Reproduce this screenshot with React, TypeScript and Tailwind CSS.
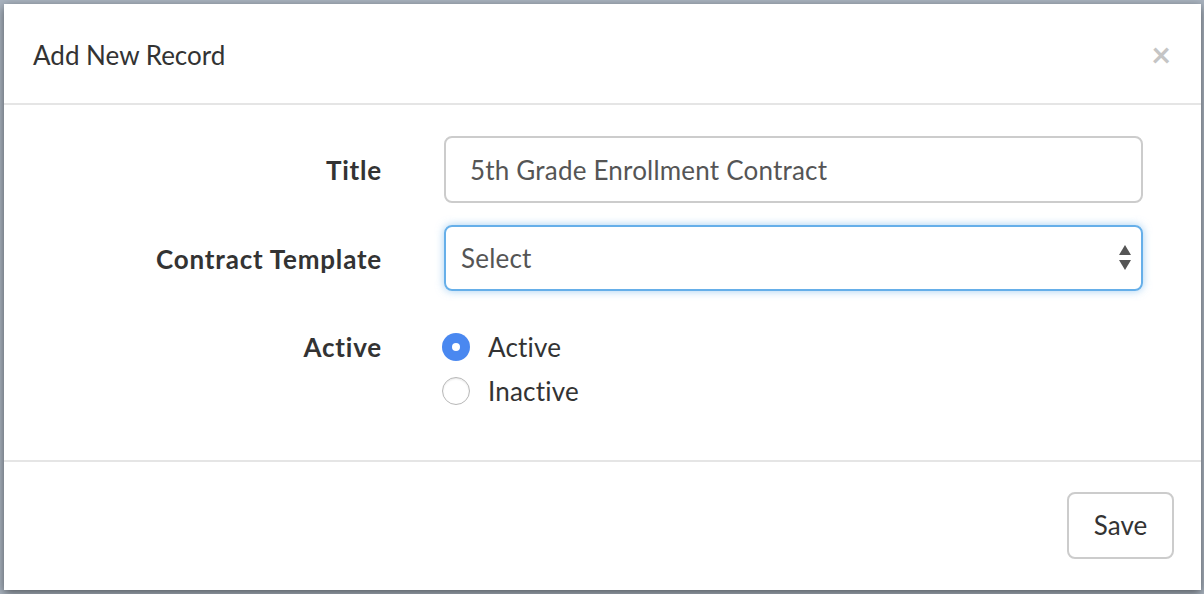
import React, { useState } from "react";

const font = { fontFamily: "Lato, 'Liberation Sans', sans-serif" };

export default function App() {
  const [active, setActive] = useState(true);

  return (
    <div
      className="w-[1204px] h-[594px] overflow-hidden bg-[#a9b3bf] pt-[4px] pl-[4px]"
      style={font}
    >
      <div className="w-[1197px] h-[586px] bg-white shadow-[0_3px_9px_rgba(0,0,0,0.5)] flex flex-col">
        {/* Header */}
        <div className="h-[101px] shrink-0 flex items-center justify-between pl-[29px] pr-[30px] pt-[3px] border-b-2 border-[#e5e5e5]">
          <h4 className="text-[26px] text-[#333]">Add New Record</h4>
          <button className="text-[34px] leading-none font-bold text-[#c5c5c5] -mt-[3px]">×</button>
        </div>

        {/* Body */}
        <div className="h-[355px] shrink-0 pt-[31px] text-[26px] text-[#333]">
          <div className="flex items-center">
            <label className="w-[378px] text-right font-bold tracking-[0.8px] pt-[2px]">Title</label>
            <input
              type="text"
              defaultValue="5th Grade Enrollment Contract"
              className="ml-[62px] w-[699px] h-[67px] rounded-[8px] border-2 border-[#ccc] px-[24px] text-[26px] tracking-[0.2px] text-[#555] outline-none"
            />
          </div>

          <div className="flex items-center mt-[22px]">
            <label className="w-[378px] text-right font-bold tracking-[0.8px] pt-[2px]">Contract Template</label>
            <div className="ml-[62px] w-[699px] h-[66px] rounded-[8px] border-2 border-[#66afe9] shadow-[0_0_8px_rgba(102,175,233,0.6)] flex items-center justify-between pl-[15px] pr-[9px]">
              <span className="text-[#555] tracking-[0.2px] pt-[1px]">Select</span>
              <svg width="14" height="28" viewBox="0 0 14 28">
                <path d="M7 1 L13 11 L1 11 Z" fill="#555" />
                <path d="M1 16 L13 16 L7 26 Z" fill="#555" />
              </svg>
            </div>
          </div>

          <div className="flex mt-[34px]">
            <label className="w-[378px] text-right font-bold tracking-[0.8px] leading-[44px]">Active</label>
            <div className="ml-[60px] flex flex-col">
              {[
                { label: "Active", on: true },
                { label: "Inactive", on: false },
              ].map((o) => {
                const checked = active === o.on;
                return (
                  <div
                    key={o.label}
                    className="flex items-center h-[44px] cursor-pointer"
                    onClick={() => setActive(o.on)}
                  >
                    {checked ? (
                      <span className="w-[28px] h-[28px] rounded-full bg-[#4a88f0] flex items-center justify-center">
                        <span className="w-[8px] h-[8px] rounded-full bg-white" />
                      </span>
                    ) : (
                      <span className="w-[28px] h-[28px] rounded-full border border-[#b8b8b8] bg-white shadow-[inset_0_1px_2px_rgba(0,0,0,0.1)]" />
                    )}
                    <span className="ml-[18px] text-[#333] tracking-[0.2px]">{o.label}</span>
                  </div>
                );
              })}
            </div>
          </div>
        </div>

        {/* Footer */}
        <div className="flex-1 border-t-2 border-[#e5e5e5] flex justify-end pt-[30px] pr-[27px]">
          <button className="w-[107px] h-[67px] rounded-[8px] border-2 border-[#ccc] bg-white text-[26px] text-[#333]">
            Save
          </button>
        </div>
      </div>
    </div>
  );
}
